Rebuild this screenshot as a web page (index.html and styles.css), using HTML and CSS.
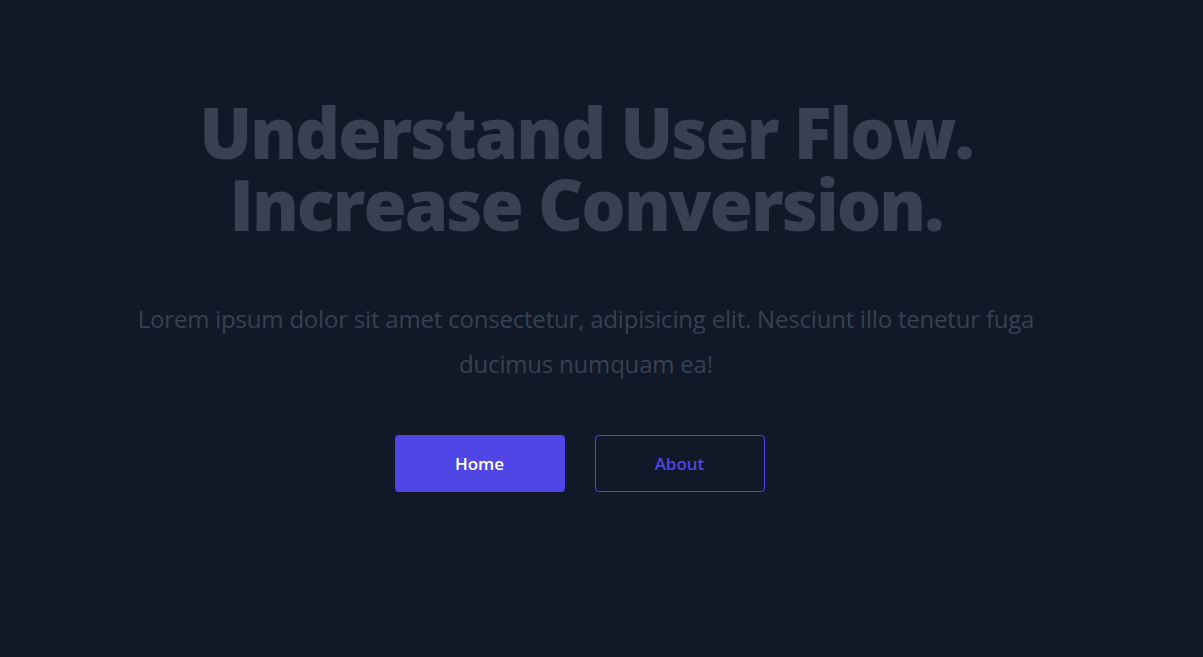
FILE: index.html
```html
<!DOCTYPE html>
<html lang="en">
<head>
<meta charset="utf-8">
<title>Understand User Flow</title>
<link rel="stylesheet" href="styles.css">
</head>
<body>
<section class="hero">
  <h1 class="hero-title">Understand User Flow.<br>Increase Conversion.</h1>
  <p class="hero-text">Lorem ipsum dolor sit amet consectetur, adipisicing elit. Nesciunt illo tenetur fuga ducimus numquam ea!</p>
  <div class="hero-actions">
    <a class="btn btn-primary" href="#">Home</a>
    <a class="btn btn-outline" href="#">About</a>
  </div>
</section>
</body>
</html>
```
FILE: styles.css
```css
html, body {
  margin: 0;
  padding: 0;
  background: #111827;
  height: 100%;
}
body {
  font-family: "Open Sans", "Noto Sans", sans-serif;
}
.hero {
  display: flex;
  flex-direction: column;
  align-items: center;
  text-align: center;
  padding: 96px 31px 0 0;
}
.hero-title {
  margin: 0;
  font-family: "Open Sans", sans-serif;
  font-size: 70px;
  line-height: 72px;
  font-weight: 800;
  letter-spacing: -2px;
  color: #374151;
}
.hero-text {
  margin: 56px 0 0;
  max-width: 930px;
  font-size: 24px;
  line-height: 45px;
  font-weight: 400;
  letter-spacing: -0.2px;
  color: #374151;
}
.hero-actions {
  display: flex;
  gap: 30px;
  margin: 49px 13px 0 0;
}
.btn {
  box-sizing: border-box;
  display: flex;
  align-items: center;
  justify-content: center;
  width: 170px;
  height: 57px;
  border-radius: 4px;
  font-size: 17px;
  font-weight: 600;
  text-decoration: none;
}
.btn-primary {
  background: #4f46e5;
  color: #ffffff;
}
.btn-outline {
  border: 1px solid #4f46e5;
  color: #4f46e5;
}
```
